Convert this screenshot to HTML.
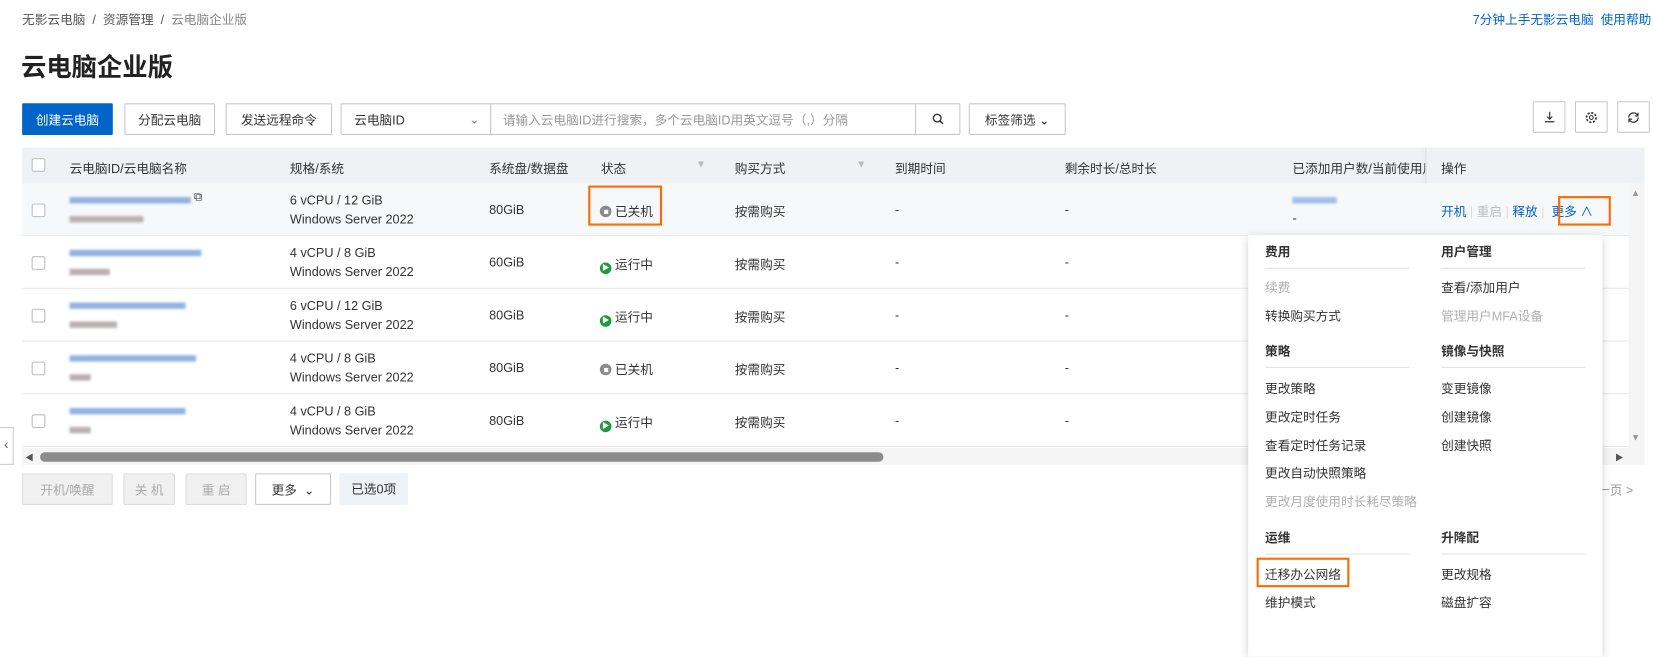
<!DOCTYPE html>
<html><head><meta charset="utf-8"><style>
*{box-sizing:border-box;margin:0;padding:0}
html,body{width:1653px;height:612px;overflow:hidden;background:#fff}
#w{position:absolute;left:0;top:0;width:1568px;height:581px;transform:scale(1.0542);transform-origin:0 0;font-family:"Liberation Sans","Noto Sans CJK SC",sans-serif;font-size:12px;color:#333}
.a{position:absolute;white-space:nowrap}
.btn{position:absolute;height:30px;border:1px solid #c8c8c8;background:#fff;display:flex;align-items:center;justify-content:center;font-size:12px;color:#333;border-radius:1px}
.cb{position:absolute;width:13px;height:13px;border:1px solid #bdbdbd;background:#fff;border-radius:2px}
.blur{position:absolute;height:6px;filter:blur(1.2px)}
.row{position:absolute;left:21px;width:1524px;height:50px;border-bottom:1px solid #e8e8e8}
.dd{position:absolute;left:1184px;top:223px;width:336px;height:400px;background:#fff;box-shadow:0 2px 8px rgba(0,0,0,.18)}
.or{position:absolute;border:2px solid #ff6a00}
</style></head><body><div id="w">
<div class="a" style="left:21px;top:10px;color:#555">无影云电脑 &nbsp;/&nbsp; 资源管理 &nbsp;/&nbsp; <span style="color:#888">云电脑企业版</span></div>
<div class="a" style="left:1397px;top:10px;color:#0064c8">7分钟上手无影云电脑 &nbsp;使用帮助</div>
<div class="a" style="left:20px;top:44px;font-size:24px;font-weight:bold;color:#222">云电脑企业版</div>

<div class="btn" style="left:21px;top:98px;width:86px;background:#0064c8;border-color:#0064c8;color:#fff">创建云电脑</div>
<div class="btn" style="left:118px;top:98px;width:86px">分配云电脑</div>
<div class="btn" style="left:214px;top:98px;width:101px">发送远程命令</div>
<div class="btn" style="left:323px;top:98px;width:143px;justify-content:flex-start;padding-left:12px">云电脑ID<span style="position:absolute;right:10px;color:#888">&#8964;</span></div>
<div class="btn" style="left:465px;top:98px;width:404px;justify-content:flex-start;padding-left:11px;color:#999">请输入云电脑ID进行搜索，多个云电脑ID用英文逗号（,）分隔</div>
<div class="btn" style="left:868px;top:98px;width:43px"><svg width="12" height="12" viewBox="0 0 12 12"><circle cx="5" cy="5" r="3.6" fill="none" stroke="#333" stroke-width="1.3"/><path d="M7.7 7.7L10.5 10.5" stroke="#333" stroke-width="1.4"/></svg></div>
<div class="btn" style="left:919px;top:98px;width:92px">标签筛选 &#8964;</div>
<div class="btn" style="left:1454px;top:96px;width:31px"><svg width="12" height="12" viewBox="0 0 12 12"><path d="M6 1v7M3.5 5.5L6 8l2.5-2.5M1.5 10.5h9" fill="none" stroke="#333" stroke-width="1.1"/></svg></div>
<div class="btn" style="left:1494px;top:96px;width:31px"><svg width="13" height="13" viewBox="0 0 13 13"><circle cx="6.5" cy="6.5" r="4.5" fill="none" stroke="#333" stroke-width="1.6" stroke-dasharray="2 1.5"/><circle cx="6.5" cy="6.5" r="1.8" fill="none" stroke="#333"/></svg></div>
<div class="btn" style="left:1534px;top:96px;width:31px"><svg width="13" height="13" viewBox="0 0 13 13"><path d="M11 6.5A4.5 4.5 0 0 1 2.5 8.5M2 6.5A4.5 4.5 0 0 1 10.5 4.5" fill="none" stroke="#333" stroke-width="1.2"/><path d="M10.8 2v3h-3M2.2 11V8h3" fill="none" stroke="#333" stroke-width="1.1"/></svg></div>

<div class="a" style="left:21px;top:140px;width:1539px;height:34px;background:#eff1f4"></div>
<div class="cb" style="left:30px;top:150px"></div>
<div class="a" style="left:66px;top:151px">云电脑ID/云电脑名称</div>
<div class="a" style="left:275px;top:151px">规格/系统</div>
<div class="a" style="left:464px;top:151px">系统盘/数据盘</div>
<div class="a" style="left:570px;top:151px">状态</div>
<div class="a" style="left:660px;top:151px;color:#bbb;font-size:10px">▼</div>
<div class="a" style="left:697px;top:151px">购买方式</div>
<div class="a" style="left:812px;top:151px;color:#bbb;font-size:10px">▼</div>
<div class="a" style="left:849px;top:151px">到期时间</div>
<div class="a" style="left:1010px;top:151px">剩余时长/总时长</div>
<div class="a" style="left:1226px;top:151px;width:126px;overflow:hidden">已添加用户数/当前使用用户</div>
<div class="a" style="left:1352px;top:140px;width:1px;height:285px;background:#e0e0e0;box-shadow:-2px 0 4px rgba(0,0,0,.08)"></div>
<div class="a" style="left:1367px;top:151px">操作</div>

<div class="row" style="top:174px;background:#f7f8fa"></div>
<div class="row" style="top:224px"></div>
<div class="row" style="top:274px"></div>
<div class="row" style="top:324px"></div>
<div class="row" style="top:374px"></div>

<div class="cb" style="left:30px;top:193px"></div><div class="cb" style="left:30px;top:243px"></div><div class="cb" style="left:30px;top:293px"></div><div class="cb" style="left:30px;top:343px"></div><div class="cb" style="left:30px;top:393px"></div>

<div class="blur" style="left:66px;top:187px;width:115px;background:#8fb2e0"></div><div class="blur" style="left:66px;top:205px;width:70px;background:#b8b0b0"></div>
<div class="a" style="left:184px;top:181px;font-size:11px">⧉</div>
<div class="blur" style="left:66px;top:237px;width:125px;background:#8fb2e0"></div><div class="blur" style="left:66px;top:255px;width:38px;background:#b8b0b0"></div>
<div class="blur" style="left:66px;top:287px;width:110px;background:#8fb2e0"></div><div class="blur" style="left:66px;top:305px;width:45px;background:#b8b0b0"></div>
<div class="blur" style="left:66px;top:337px;width:120px;background:#8fb2e0"></div><div class="blur" style="left:66px;top:355px;width:20px;background:#b8b0b0"></div>
<div class="blur" style="left:66px;top:387px;width:110px;background:#8fb2e0"></div><div class="blur" style="left:66px;top:405px;width:20px;background:#b8b0b0"></div>

<div class="a" style="left:275px;top:181px;line-height:18px">6 vCPU / 12 GiB<br>Windows Server 2022</div>
<div class="a" style="left:275px;top:231px;line-height:18px">4 vCPU / 8 GiB<br>Windows Server 2022</div>
<div class="a" style="left:275px;top:281px;line-height:18px">6 vCPU / 12 GiB<br>Windows Server 2022</div>
<div class="a" style="left:275px;top:331px;line-height:18px">4 vCPU / 8 GiB<br>Windows Server 2022</div>
<div class="a" style="left:275px;top:381px;line-height:18px">4 vCPU / 8 GiB<br>Windows Server 2022</div>

<div class="a" style="left:464px;top:192px">80GiB</div><div class="a" style="left:464px;top:242px">60GiB</div><div class="a" style="left:464px;top:292px">80GiB</div><div class="a" style="left:464px;top:342px">80GiB</div><div class="a" style="left:464px;top:392px">80GiB</div>

<div class="a" style="left:569px;top:192px"><span style="display:inline-block;width:11px;height:11px;border-radius:50%;background:#8a8a8a;vertical-align:-1px;position:relative"><span style="position:absolute;left:3.5px;top:3.5px;width:4px;height:4px;background:#fff"></span></span> 已关机</div>
<div class="a" style="left:569px;top:242px"><span style="display:inline-block;width:11px;height:11px;border-radius:50%;background:#1e9a3c;vertical-align:-1px;color:#fff;font-size:7px;line-height:11px;text-align:center">▶</span> 运行中</div>
<div class="a" style="left:569px;top:292px"><span style="display:inline-block;width:11px;height:11px;border-radius:50%;background:#1e9a3c;vertical-align:-1px;color:#fff;font-size:7px;line-height:11px;text-align:center">▶</span> 运行中</div>
<div class="a" style="left:569px;top:342px"><span style="display:inline-block;width:11px;height:11px;border-radius:50%;background:#8a8a8a;vertical-align:-1px;position:relative"><span style="position:absolute;left:3.5px;top:3.5px;width:4px;height:4px;background:#fff"></span></span> 已关机</div>
<div class="a" style="left:569px;top:392px"><span style="display:inline-block;width:11px;height:11px;border-radius:50%;background:#1e9a3c;vertical-align:-1px;color:#fff;font-size:7px;line-height:11px;text-align:center">▶</span> 运行中</div>
<div class="or" style="left:558px;top:176px;width:70px;height:38px"></div>

<div class="a" style="left:697px;top:192px">按需购买</div><div class="a" style="left:697px;top:242px">按需购买</div><div class="a" style="left:697px;top:292px">按需购买</div><div class="a" style="left:697px;top:342px">按需购买</div><div class="a" style="left:697px;top:392px">按需购买</div>
<div class="a" style="left:849px;top:192px">-</div><div class="a" style="left:849px;top:242px">-</div><div class="a" style="left:849px;top:292px">-</div><div class="a" style="left:849px;top:342px">-</div><div class="a" style="left:849px;top:392px">-</div>
<div class="a" style="left:1010px;top:192px">-</div><div class="a" style="left:1010px;top:242px">-</div><div class="a" style="left:1010px;top:292px">-</div><div class="a" style="left:1010px;top:342px">-</div><div class="a" style="left:1010px;top:392px">-</div>
<div class="blur" style="left:1226px;top:187px;width:42px;background:#9cc0ea"></div><div class="a" style="left:1226px;top:200px">-</div>

<div class="a" style="left:1367px;top:192px;color:#0064c8">开机 <span style="color:#ddd">|</span> <span style="color:#bbb">重启</span> <span style="color:#ddd">|</span> 释放 <span style="color:#ddd">|</span> &nbsp;更多 ∧</div>
<div class="or" style="left:1478px;top:186px;width:50px;height:28px"></div>

<div class="a" style="left:21px;top:425px;width:1539px;height:16px;background:#f5f5f5"></div>
<div class="a" style="left:24px;top:429px;color:#555;font-size:8px">◀</div>
<div class="a" style="left:38px;top:429px;width:800px;height:9px;border-radius:5px;background:#8c8c8c"></div>
<div class="a" style="left:1532px;top:429px;color:#555;font-size:8px">▶</div>
<div class="a" style="left:1545px;top:174px;width:15px;height:251px;background:#f5f5f5"></div>
<div class="a" style="left:1547px;top:178px;color:#999;font-size:9px">▲</div>
<div class="a" style="left:1547px;top:410px;color:#999;font-size:9px">▼</div>
<div class="a" style="left:0;top:405px;width:13px;height:36px;border:1px solid #ccc;border-left:none;background:#fff;color:#666;font-size:13px;line-height:32px;text-align:center">‹</div>

<div class="btn" style="left:21px;top:449px;width:86px;background:#f0f0f0;color:#aaa;border-color:#ddd">开机/唤醒</div>
<div class="btn" style="left:117px;top:449px;width:49px;background:#f0f0f0;color:#aaa;border-color:#ddd">关 机</div>
<div class="btn" style="left:176px;top:449px;width:58px;background:#f0f0f0;color:#aaa;border-color:#ddd">重 启</div>
<div class="btn" style="left:242px;top:449px;width:72px">更多 &nbsp;&#8964;</div>
<div class="a" style="left:322px;top:449px;width:65px;height:30px;background:#eff3f8;line-height:30px;text-align:center">已选0项</div>
<div class="a" style="left:1515px;top:456px;color:#999">一页 &gt;</div>

<div class="dd"></div>
<div class="a" style="left:1200px;top:230px;font-weight:bold">费用</div><div class="a" style="left:1200px;top:254px;width:137px;height:1px;background:#e3e3e3"></div>
<div class="a" style="left:1367px;top:230px;font-weight:bold">用户管理</div><div class="a" style="left:1367px;top:254px;width:137px;height:1px;background:#e3e3e3"></div>
<div class="a" style="left:1200px;top:264px;color:#b0b0b0">续费</div>
<div class="a" style="left:1200px;top:291px">转换购买方式</div>
<div class="a" style="left:1367px;top:264px">查看/添加用户</div>
<div class="a" style="left:1367px;top:291px;color:#b0b0b0">管理用户MFA设备</div>
<div class="a" style="left:1200px;top:324px;font-weight:bold">策略</div><div class="a" style="left:1200px;top:348px;width:137px;height:1px;background:#e3e3e3"></div>
<div class="a" style="left:1367px;top:324px;font-weight:bold">镜像与快照</div><div class="a" style="left:1367px;top:348px;width:137px;height:1px;background:#e3e3e3"></div>
<div class="a" style="left:1200px;top:360px">更改策略</div>
<div class="a" style="left:1200px;top:387px">更改定时任务</div>
<div class="a" style="left:1200px;top:414px">查看定时任务记录</div>
<div class="a" style="left:1200px;top:440px">更改自动快照策略</div>
<div class="a" style="left:1200px;top:467px;color:#b0b0b0">更改月度使用时长耗尽策略</div>
<div class="a" style="left:1367px;top:360px">变更镜像</div>
<div class="a" style="left:1367px;top:387px">创建镜像</div>
<div class="a" style="left:1367px;top:414px">创建快照</div>
<div class="a" style="left:1200px;top:501px;font-weight:bold">运维</div><div class="a" style="left:1200px;top:525px;width:137px;height:1px;background:#e3e3e3"></div>
<div class="a" style="left:1367px;top:501px;font-weight:bold">升降配</div><div class="a" style="left:1367px;top:525px;width:137px;height:1px;background:#e3e3e3"></div>
<div class="a" style="left:1200px;top:536px">迁移办公网络</div>
<div class="a" style="left:1200px;top:563px">维护模式</div>
<div class="a" style="left:1367px;top:536px">更改规格</div>
<div class="a" style="left:1367px;top:563px">磁盘扩容</div>
<div class="or" style="left:1192px;top:529px;width:88px;height:28px"></div>
</div></body></html>
